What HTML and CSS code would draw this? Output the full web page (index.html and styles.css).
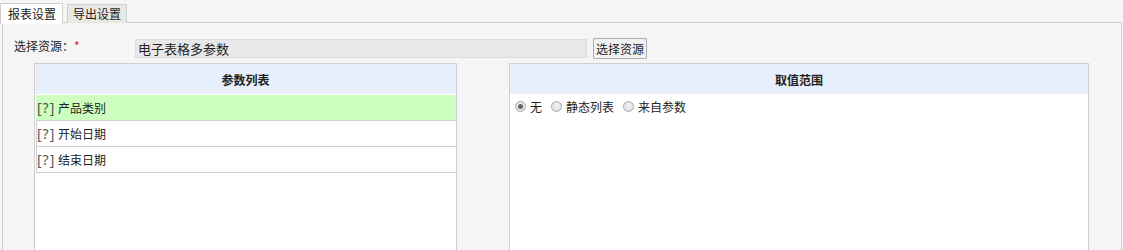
FILE: index.html
```html
<!DOCTYPE html>
<html>
<head>
<meta charset="utf-8">
<link rel="stylesheet" href="styles.css">
</head>
<body>
<div class="tabs">
  <div class="tab active">报表设置</div>
  <div class="tab">导出设置</div>
</div>
<div class="content">
  <div class="form-row">
    <label class="label">选择资源：<span class="req">*</span></label>
    <div class="input">电子表格多参数</div>
    <button class="btn">选择资源</button>
  </div>
  <div class="panels">
    <div class="panel left">
      <div class="panel-head">参数列表</div>
      <div class="list">
        <div class="row selected"><span class="q">[?]</span><span>产品类别</span></div>
        <div class="row"><span class="q">[?]</span><span>开始日期</span></div>
        <div class="row"><span class="q">[?]</span><span>结束日期</span></div>
      </div>
    </div>
    <div class="panel right">
      <div class="panel-head">取值范围</div>
      <div class="radios">
        <span class="radio checked"></span><span class="rlabel">无</span>
        <span class="radio"></span><span class="rlabel">静态列表</span>
        <span class="radio"></span><span class="rlabel">来自参数</span>
      </div>
    </div>
  </div>
</div>
</body>
</html>
```
FILE: styles.css
```css
* { box-sizing: border-box; }
html, body { margin: 0; padding: 0; }
body {
  background: #f5f5f5;
  font-family: "Noto Sans CJK SC", "Microsoft YaHei", sans-serif;
  font-size: 12px;
  color: #222;
  overflow: hidden;
  height: 250px;
}
.tabs {
  display: flex;
  align-items: flex-end;
  gap: 4px;
  padding-top: 2px;
  height: 23px;
  position: relative;
  z-index: 1;
}
.tab {
  height: 19px;
  line-height: 17px;
  padding: 0 5px;
  border: 1px solid #cfcfcf;
  border-bottom: none;
  background: #e9e9e4;
}
.tab.active {
  height: 21px;
  line-height: 19px;
  padding: 0 6px 0 7px;
  background: #fff;
  margin-bottom: -1px;
}
.content {
  margin-left: 2px;
  width: 1120px;
  height: 228px;
  border: 1px solid #d0d0d0;
  border-bottom: none;
  margin-top: -1px;
  background: #f5f5f5;
  overflow: hidden;
}
.form-row {
  display: flex;
  align-items: center;
  height: 24px;
  margin-top: 13px;
  padding-left: 11px;
}
.label {
  width: 121px;
  line-height: 18px;
  align-self: flex-start;
  margin-top: 1px;
}
.req { color: #e02020; }
.input {
  width: 452px;
  height: 19px;
  line-height: 17px;
  background: #e8e8e8;
  border: 1px solid #dcdcdc;
  padding-left: 2px;
  font-size: 13px;
  color: #222;
}
.btn {
  margin-left: 6px;
  height: 21px;
  width: 54px;
  padding: 0;
  font-family: inherit;
  font-size: 12px;
  color: #222;
  background: #f2f2f2;
  border: 1px solid #a7afb7;
  border-radius: 1px;
}
.panels {
  display: flex;
  margin-top: 3px;
  padding-left: 31px;
  gap: 52px;
}
.panel {
  background: #fff;
  border: 1px solid #cfcfcf;
  border-bottom: none;
  height: 190px;
}
.panel.left { width: 423px; }
.panel.right { width: 580px; }
.panel-head {
  height: 30px;
  background: #e8effc;
  text-align: center;
  line-height: 31px;
  font-weight: bold;
  color: #222;
}
.list {
  margin-top: 1px;
  padding-left: 1px;
}
.row {
  height: 26px;
  border-left: 1px solid #cfcfcf;
  border-bottom: 1px solid #cfcfcf;
  display: flex;
  align-items: center;
}
.row.selected { background: #ccffc0; border-left-color: #ccffc0; }
.q {
  color: #555;
  font-family: "Noto Sans", "DejaVu Sans", sans-serif;
  font-size: 14px;
  width: 21px;
  letter-spacing: 1px;
  line-height: 16px;
}
.radios {
  display: flex;
  align-items: center;
  height: 22px;
  margin-top: 1px;
  padding-left: 5px;
}
.radio {
  width: 11px;
  height: 11px;
  border-radius: 50%;
  border: 1px solid #a8a8a8;
  background: radial-gradient(circle at 50% 40%, #f4f4f4, #d8d8d8);
  display: inline-flex;
  align-items: center;
  justify-content: center;
  margin-right: 4px;
}
.radio.checked::after {
  content: "";
  width: 5px;
  height: 5px;
  border-radius: 50%;
  background: #666;
}
.rlabel { margin-right: 9px; }
```
